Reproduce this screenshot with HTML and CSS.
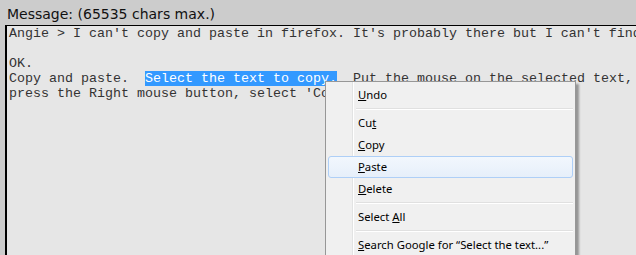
FILE: index.html
```html
<!DOCTYPE html>
<html lang="en">

<head>
    <meta charset="UTF-8">
    <title>Message</title>
    <link rel="stylesheet" href="styles.css">
</head>

<body>
    <div class="label">Message: (65535 chars max.)</div>
    <div class="editor">
        <div class="text">Angie &gt; I can't copy and paste in firefox. It's probably there but I can't find it.

OK.
Copy and paste.  <span class="selected">Select the text to copy.</span>  Put the mouse on the selected text, and
press the Right mouse button, select 'Copy'.</div>
    </div>

    <div class="menu">
        <div class="item"><u>U</u>ndo</div>
        <div class="sep"></div>
        <div class="item">Cu<u>t</u></div>
        <div class="item"><u>C</u>opy</div>
        <div class="item hover"><u>P</u>aste</div>
        <div class="item"><u>D</u>elete</div>
        <div class="sep"></div>
        <div class="item">Select <u>A</u>ll</div>
        <div class="sep"></div>
        <div class="item"><u>S</u>earch Google for “Select the text...”</div>
    </div>
</body>

</html>
```

FILE: styles.css
```css
html,
body {
    margin: 0;
    height: 100%;
    overflow: hidden;
}

body {
    background-color: #cccccc;
    font-family: "DejaVu Sans", Verdana, sans-serif;
}

.label {
    height: 25px;
    padding-left: 7px;
    font-size: 14px;
    line-height: 28px;
    color: #111;
}

.editor {
    margin-left: 5px;
    height: 230px;
    border-left: 2px solid #000;
    border-top: 1px solid #000;
    background-color: #e6e6e6;
    overflow: hidden;
}

.text {
    padding: 0 0 0 2px;
    font-family: "Liberation Mono", "Courier New", monospace;
    font-size: 13.33px;
    line-height: 15px;
    color: #333;
    white-space: pre;
}

.selected {
    background-color: #3399ff;
    color: #fff;
}

.menu {
    position: absolute;
    left: 325px;
    top: 81px;
    width: 245px;
    padding: 2px;
    background-color: #f0f0f0;
    border: 1px solid #979797;
    box-shadow: 3px 3px 2px rgba(0, 0, 0, 0.35);
    background-image: linear-gradient(to right, transparent 26px, #e2e3e3 26px, #e2e3e3 27px, #fff 27px, #fff 28px, transparent 28px);
    font-family: "Noto Sans", "Segoe UI", sans-serif;
    font-size: 11.3px;
    color: #000;
}

.item {
    height: 20px;
    line-height: 20px;
    padding-left: 29px;
    border: 1px solid transparent;
    border-radius: 3px;
}

.item.hover {
    border-color: #aecff7;
    background: linear-gradient(#f2f7fd, #e6effa);
}

.sep {
    height: 1px;
    margin: 2px 0 2px 28px;
    background-color: #e0e0e0;
    border-bottom: 1px solid #fff;
}
```
